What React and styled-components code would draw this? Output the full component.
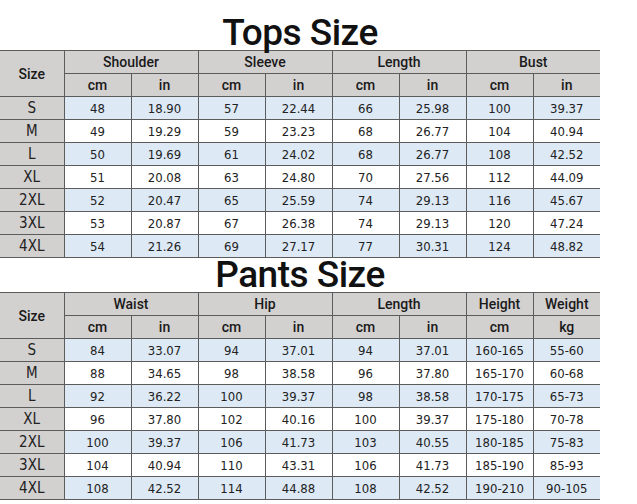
import React from 'react';
import styled, { createGlobalStyle } from 'styled-components';

const GlobalStyle = createGlobalStyle`
  body {
    margin: 0;
    background: #ffffff;
  }
`;

const Page = styled.div`
  width: 637px;
  height: 504px;
  background: #fff;
  overflow: hidden;
`;

const Title = styled.h2`
  margin: 0;
  width: 600px;
  height: 34px;
  padding-top: ${props => props.$padTop}px;
  text-align: center;
  font-family: Roboto, "Liberation Sans", sans-serif;
  font-weight: 500;
  font-size: 37px;
  line-height: 34px;
  letter-spacing: -0.5px;
  color: #111;
`;

const Table = styled.table`
  width: 600px;
  table-layout: fixed;
  border-collapse: collapse;
  font-family: "DejaVu Sans Condensed", "Liberation Sans", sans-serif;
  font-size: 13px;
  color: #222;
`;

const Row = styled.tr`
  height: 23px;
  background: ${props => props.$tint ? '#dde9f5' : '#ffffff'};
`;

const HeadCell = styled.th`
  padding: 0;
  border: 1px solid #5c5c5c;
  background: #d3d0d0;
  font-family: Roboto, "Liberation Sans", sans-serif;
  font-weight: 500;
  font-size: 14px;
  color: #1a1a1a;
  text-align: center;
  vertical-align: middle;
  &:first-child { border-left: none; }
  &:last-child { border-right: none; }
`;

const SubCell = styled(HeadCell)`
  &:first-child { border-left: 1px solid #5c5c5c; }
`;

const SizeCell = styled.td`
  padding: 0;
  border: 1px solid #5c5c5c;
  border-left: none;
  background: #d3d0d0;
  font-size: 15px;
  text-align: center;
`;

const Cell = styled.td`
  padding: 0;
  border: 1px solid #5c5c5c;
  text-align: center;
  &:last-child { border-right: none; }
`;

const tops = [
  ['S', 48, '18.90', 57, '22.44', 66, '25.98', 100, '39.37'],
  ['M', 49, '19.29', 59, '23.23', 68, '26.77', 104, '40.94'],
  ['L', 50, '19.69', 61, '24.02', 68, '26.77', 108, '42.52'],
  ['XL', 51, '20.08', 63, '24.80', 70, '27.56', 112, '44.09'],
  ['2XL', 52, '20.47', 65, '25.59', 74, '29.13', 116, '45.67'],
  ['3XL', 53, '20.87', 67, '26.38', 74, '29.13', 120, '47.24'],
  ['4XL', 54, '21.26', 69, '27.17', 77, '30.31', 124, '48.82'],
];

const pants = [
  ['S', 84, '33.07', 94, '37.01', 94, '37.01', '160-165', '55-60'],
  ['M', 88, '34.65', 98, '38.58', 96, '37.80', '165-170', '60-68'],
  ['L', 92, '36.22', 100, '39.37', 98, '38.58', '170-175', '65-73'],
  ['XL', 96, '37.80', 102, '40.16', 100, '39.37', '175-180', '70-78'],
  ['2XL', 100, '39.37', 106, '41.73', 103, '40.55', '180-185', '75-83'],
  ['3XL', 104, '40.94', 110, '43.31', 106, '41.73', '185-190', '85-93'],
  ['4XL', 108, '42.52', 114, '44.88', 108, '42.52', '190-210', '90-105'],
];

const Cols = () => (
  <colgroup>
    <col style={{ width: 64 }} />
    {Array.from({ length: 8 }).map((_, i) => <col key={i} style={{ width: 67 }} />)}
  </colgroup>
);

// groups: [label, span]; units: labels for second header row
const SizeTable = ({ groups, units, rows }) => (
  <Table>
    <Cols />
    <thead>
      <Row>
        <HeadCell rowSpan={2}>Size</HeadCell>
        {groups.map(([label, span]) => (
          <HeadCell key={label} colSpan={span}>{label}</HeadCell>
        ))}
      </Row>
      <Row>
        {units.map((u, i) => <SubCell key={i}>{u}</SubCell>)}
      </Row>
    </thead>
    <tbody>
      {rows.map((row, i) => (
        <Row key={row[0]} $tint={i % 2 === 0}>
          <SizeCell>{row[0]}</SizeCell>
          {row.slice(1).map((v, j) => <Cell key={j}>{v}</Cell>)}
        </Row>
      ))}
    </tbody>
  </Table>
);

export default function App() {
  return (
    <Page>
      <GlobalStyle />
      <Title $padTop={16}>Tops Size</Title>
      <SizeTable
        groups={[['Shoulder', 2], ['Sleeve', 2], ['Length', 2], ['Bust', 2]]}
        units={['cm', 'in', 'cm', 'in', 'cm', 'in', 'cm', 'in']}
        rows={tops}
      />
      <Title $padTop={0}>Pants Size</Title>
      <SizeTable
        groups={[['Waist', 2], ['Hip', 2], ['Length', 2], ['Height', 1], ['Weight', 1]]}
        units={['cm', 'in', 'cm', 'in', 'cm', 'in', 'cm', 'kg']}
        rows={pants}
      />
    </Page>
  );
}
